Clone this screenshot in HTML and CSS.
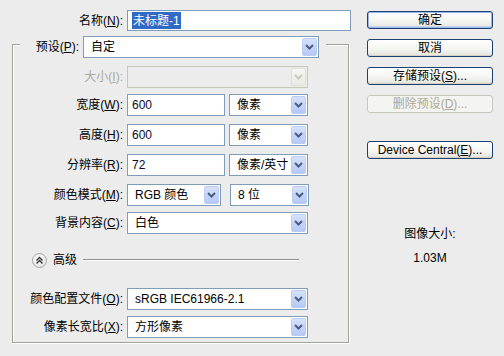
FILE: index.html
```html
<!DOCTYPE html>
<html lang="zh">
<head>
<meta charset="utf-8">
<title>新建</title>
<link rel="stylesheet" href="styles.css">
</head>
<body>
<div class="dialog">
  <div class="left">
    <div class="row name-row">
      <span class="lbl name-lbl">名称(<u>N</u>):</span>
      <div class="input name-input"><span class="hl">未标题-1</span></div>
    </div>
    <div class="group">
      <div class="row preset-row">
        <span class="lbl preset-lbl">预设(<u>P</u>):</span>
        <div class="select w-preset"><span class="val">自定</span><span class="drop"><svg width="9" height="6" viewBox="0 0 9 6"><path d="M1 1 L4.5 4.5 L8 1" fill="none" stroke="#4a5d80" stroke-width="2"/></svg></span></div>
      </div>
      <div class="row r-size">
        <span class="lbl disabled">大小(<u>I</u>):</span>
        <div class="select w-full off"><span class="val"></span><span class="drop"><svg width="9" height="6" viewBox="0 0 9 6"><path d="M1 1 L4.5 4.5 L8 1" fill="none" stroke="#c9c9c4" stroke-width="2"/></svg></span></div>
      </div>
      <div class="row r-w">
        <span class="lbl">宽度(<u>W</u>):</span>
        <div class="input w-num">600</div>
        <div class="select w-unit"><span class="val">像素</span><span class="drop"><svg width="9" height="6" viewBox="0 0 9 6"><path d="M1 1 L4.5 4.5 L8 1" fill="none" stroke="#4a5d80" stroke-width="2"/></svg></span></div>
      </div>
      <div class="row r-h">
        <span class="lbl">高度(<u>H</u>):</span>
        <div class="input w-num">600</div>
        <div class="select w-unit"><span class="val">像素</span><span class="drop"><svg width="9" height="6" viewBox="0 0 9 6"><path d="M1 1 L4.5 4.5 L8 1" fill="none" stroke="#4a5d80" stroke-width="2"/></svg></span></div>
      </div>
      <div class="row r-r">
        <span class="lbl">分辨率(<u>R</u>):</span>
        <div class="input w-num">72</div>
        <div class="select w-unit"><span class="val">像素/英寸</span><span class="drop"><svg width="9" height="6" viewBox="0 0 9 6"><path d="M1 1 L4.5 4.5 L8 1" fill="none" stroke="#4a5d80" stroke-width="2"/></svg></span></div>
      </div>
      <div class="row r-m">
        <span class="lbl">颜色模式(<u>M</u>):</span>
        <div class="select w-mode"><span class="val">RGB 颜色</span><span class="drop"><svg width="9" height="6" viewBox="0 0 9 6"><path d="M1 1 L4.5 4.5 L8 1" fill="none" stroke="#4a5d80" stroke-width="2"/></svg></span></div>
        <div class="select w-unit gap5"><span class="val">8 位</span><span class="drop"><svg width="9" height="6" viewBox="0 0 9 6"><path d="M1 1 L4.5 4.5 L8 1" fill="none" stroke="#4a5d80" stroke-width="2"/></svg></span></div>
      </div>
      <div class="row r-bg">
        <span class="lbl">背景内容(<u>C</u>):</span>
        <div class="select w-full"><span class="val">白色</span><span class="drop"><svg width="9" height="6" viewBox="0 0 9 6"><path d="M1 1 L4.5 4.5 L8 1" fill="none" stroke="#4a5d80" stroke-width="2"/></svg></span></div>
      </div>
      <div class="adv">
        <span class="circle"><svg width="9" height="9" viewBox="0 0 9 9"><path d="M1.5 4.5 L4.5 1.5 L7.5 4.5 M1.5 7.5 L4.5 4.5 L7.5 7.5" fill="none" stroke="#333" stroke-width="1.4"/></svg></span>
        <span class="adv-txt">高级</span>
        <span class="adv-line"></span>
      </div>
      <div class="row r-prof">
        <span class="lbl">颜色配置文件(<u>O</u>):</span>
        <div class="select w-full"><span class="val">sRGB IEC61966-2.1</span><span class="drop"><svg width="9" height="6" viewBox="0 0 9 6"><path d="M1 1 L4.5 4.5 L8 1" fill="none" stroke="#4a5d80" stroke-width="2"/></svg></span></div>
      </div>
      <div class="row r-asp">
        <span class="lbl">像素长宽比(<u>X</u>):</span>
        <div class="select w-full"><span class="val">方形像素</span><span class="drop"><svg width="9" height="6" viewBox="0 0 9 6"><path d="M1 1 L4.5 4.5 L8 1" fill="none" stroke="#4a5d80" stroke-width="2"/></svg></span></div>
      </div>
    </div>
  </div>
  <div class="right">
    <div class="btn b-ok">确定</div>
    <div class="btn b-next">取消</div>
    <div class="btn b-next">存储预设(<u>S</u>)...</div>
    <div class="btn b-next btn-off">删除预设(<u>D</u>)...</div>
    <div class="btn b-dev">Device Central(<u>E</u>)...</div>
    <div class="info">
      <div class="info-t">图像大小:</div>
      <div class="info-v">1.03M</div>
    </div>
  </div>
</div>
</body>
</html>
```

FILE: styles.css
```css
html, body {
  margin: 0;
  padding: 0;
  background: #ececec;
}
body {
  width: 504px;
  height: 356px;
  overflow: hidden;
  font-family: "Liberation Sans", "Noto Sans CJK SC", sans-serif;
  font-size: 12px;
  color: #000;
}
u { text-decoration: underline; text-underline-offset: 1px; }

.dialog {
  display: flex;
  align-items: flex-start;
}
.left {
  width: 355px;
  display: flex;
  flex-direction: column;
}
.right {
  width: 126px;
  margin-left: 12px;
  display: flex;
  flex-direction: column;
}

.row {
  display: flex;
  align-items: center;
  height: 22px;
}
.lbl {
  width: 110px;
  margin-right: 4px;
  text-align: right;
  white-space: nowrap;
  line-height: 14px;
}
.lbl.disabled { color: #a9a9a0; }

.name-row {
  margin-top: 10px;
  height: 21px;
}
.name-lbl { width: 123px; }

.input {
  box-sizing: border-box;
  height: 22px;
  border: 1px solid #7f9db9;
  background: #fff;
  padding: 0 0 0 4px;
  display: flex;
  align-items: center;
  line-height: 14px;
  color: #0a0a28;
}
.name-input { width: 224px; height: 21px; padding-left: 4px; }
.hl {
  background: #316ac5;
  color: #fff;
  padding: 2px 1px 1px 1px;
  line-height: 14px;
}
.w-num { width: 98px; }

.select {
  box-sizing: border-box;
  height: 22px;
  border: 1px solid #7f9db9;
  background: #fff;
  display: flex;
  align-items: center;
  padding: 1px;
}
.select .val {
  flex: 1;
  padding-left: 6px;
  white-space: nowrap;
  overflow: hidden;
  line-height: 14px;
}
.drop {
  box-sizing: border-box;
  width: 15px;
  height: 18px;
  border: 1px solid #bccdf4;
  border-radius: 2px;
  background: linear-gradient(#d6e2fc, #b4c8f6);
  display: flex;
  align-items: center;
  justify-content: center;
}
.select.off {
  border-color: #c9c7ba;
  background: #ececec;
}
.select.off .drop {
  border-color: #e0e0da;
  background: linear-gradient(#f6f6f2, #eaeae4);
}
.w-preset { width: 236px; }
.w-full { width: 181px; }
.w-unit { width: 79px; margin-left: 4px; }
.w-unit.gap5 { margin-left: 9px; }
.w-mode { width: 94px; }

.group {
  box-sizing: border-box;
  margin-left: 12px;
  margin-top: 13px;
  width: 337px;
  border: 1px solid #a3a29a;
  box-shadow: inset 1px 1px 0 #fff, 1px 1px 0 #fff;
  padding-bottom: 4px;
  display: flex;
  flex-direction: column;
}
.preset-row {
  margin-top: -9px;
  margin-left: 7px;
  width: 306px;
  box-sizing: border-box;
  padding-right: 7px;
  background: #ececec;
}
.preset-lbl { width: 59px; }

.r-size { margin-top: 8px; }
.r-w { margin-top: 6px; }
.r-h { margin-top: 8px; }
.r-r { margin-top: 8px; }
.r-m { margin-top: 8px; }
.r-bg { margin-top: 6px; }
.r-prof { margin-top: 20px; }
.r-asp { margin-top: 6px; }

.adv {
  margin-top: 18px;
  height: 16px;
  display: flex;
  align-items: center;
  margin-left: 19px;
}
.circle {
  box-sizing: border-box;
  width: 15px;
  height: 15px;
  border-radius: 50%;
  border: 1px solid #a4a4a4;
  background: radial-gradient(circle at 40% 35%, #ffffff, #e6e6e6 70%, #d4d4d4);
  display: flex;
  align-items: center;
  justify-content: center;
}
.adv-txt {
  margin-left: 6px;
  line-height: 14px;
}
.adv-line {
  margin-left: 6px;
  width: 216px;
  height: 1px;
  background: #8e8e8e;
  border-bottom: 1px solid #fff;
}

.btn {
  box-sizing: border-box;
  height: 18px;
  border: 1px solid #1d3f72;
  border-radius: 3px;
  background: linear-gradient(#ffffff, #f4f4f0 60%, #e4e3dc);
  box-shadow: inset 0 -1px 0 #d6d0c0;
  display: flex;
  align-items: center;
  justify-content: center;
  line-height: 14px;
  white-space: nowrap;
}
.b-ok { margin-top: 11px; box-shadow: inset 0 0 0 1px #9db8e8, inset 0 -2px 0 #c6d4ee; }
.b-next { margin-top: 10px; }
.b-dev { margin-top: 28px; }
.btn-off {
  border-color: #c9c7ba;
  color: #aca899;
  background: #f4f4f0;
  box-shadow: none;
}
.info {
  margin-top: 68px;
  text-align: center;
  line-height: 14px;
}
.info-v { margin-top: 10px; }
```
